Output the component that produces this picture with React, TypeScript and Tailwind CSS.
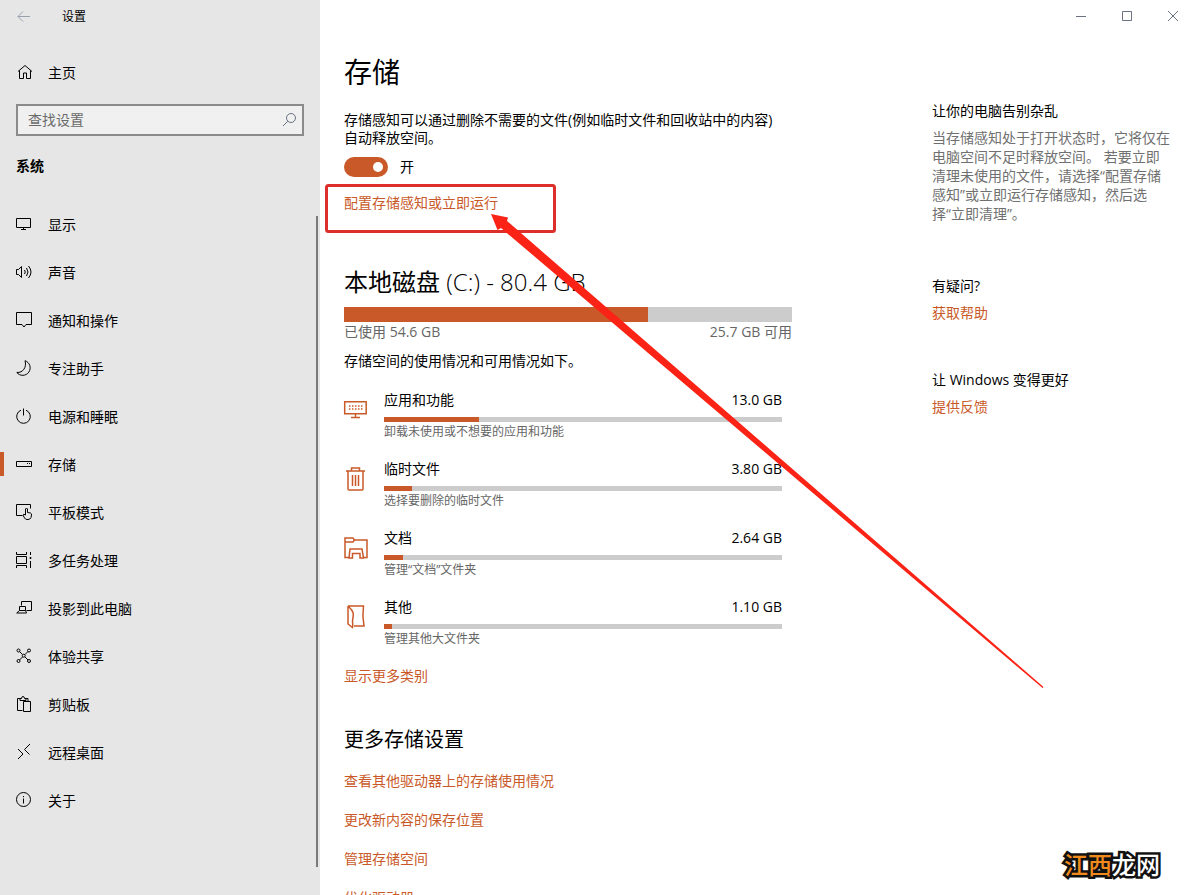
import { useState, type ReactNode } from 'react';

type NavItem = { label: string; icon: ReactNode };

const navItems: NavItem[] = [
  {
    label: '显示',
    icon: <path d="M.5 2.5h14v9H.5zM7.5 11.5v2M5 13.5h5" />,
  },
  {
    label: '声音',
    icon: (
      <path d="M.5 5.5h2l3-3v11l-3-3h-2zM8.5 6q1.500 2 0 4M10.500 4q3 4 0 8M12.500 2q5 6 0 12" />
    ),
  },
  {
    label: '通知和操作',
    icon: <path d="M.5.5h15v12H10l-2 2.500-2-2.500H.5z" />,
  },
  {
    label: '专注助手',
    icon: <path d="M9 .7A7.500 7.500 0 1 1 .8 12.500C7 13 11 7 9 .7z" />,
  },
  {
    label: '电源和睡眠',
    icon: <path d="M5 2.200a6.800 6.800 0 1 0 5 0M7.500.5v7" />,
  },
  {
    label: '存储',
    icon: <path d="M.5 5.500h15v5H.5zM11 7.500h1M13 7.500h1" />,
  },
  {
    label: '平板模式',
    icon: (
      <path d="M6.500 11.500h-6v-11h14v4M9.500 11V5q1-2 2 0v3.500l3 .5q1.200.5 1 2l-.5 2.500q-.8 2-3 2h-1q-1.500 0-2.500-1.500L7 11q.5-1.500 2.500 0" />
    ),
  },
  {
    label: '多任务处理',
    icon: (
      <>
        <path d="M.5 0v2.500h10V0M.5 16v-2.500h10V16M.5 4.500h10v7H.5zM14.500 0v3M14.500 9v7" />
        <path d="M14 5.500h1v1h-1z" fill="currentColor" />
      </>
    ),
  },
  {
    label: '投影到此电脑',
    icon: (
      <path d="M5.500 5.500v-4h10v9h-5M3.500 10.500v-4h6v4M3.500 10.500h6l1 2.500H.7z" />
    ),
  },
  {
    label: '体验共享',
    icon: (
      <>
        <circle cx="2.500" cy="2.500" r="1.500" />
        <circle cx="13" cy="2.500" r="1.500" />
        <circle cx="2.500" cy="13" r="1.500" />
        <circle cx="13" cy="13" r="1.500" />
        <circle cx="7.700" cy="7.700" r="1.500" />
        <path d="M3.500 3.500l3 3M12 3.500l-3 3M3.500 12l3-3M12 12L9 9" />
      </>
    ),
  },
  {
    label: '剪贴板',
    icon: (
      <path d="M6.500 14.500h-5v-12h3M9.500 2.500H12v3M4 4.500v-2h1.500q0-2 1.500-2t1.500 2H10v2zM7.500 5.500h7v10h-7z" />
    ),
  },
  {
    label: '远程桌面',
    icon: <path d="M2 5l5 5-5 5M14 0L8.500 5.500l5 5" />,
  },
  {
    label: '关于',
    icon: (
      <>
        <circle cx="7.500" cy="7.500" r="7" />
        <path d="M7.500 6.500v5M7.500 4v1.200" />
      </>
    ),
  },
];

const usedSpace = 54.6;
const totalSpace = 80.4;

const categories = [
  {
    name: '应用和功能',
    hint: '卸载未使用或不想要的应用和功能',
    size: '13.0 GB',
    value: 13,
    icon: (
      <>
        <path d="M.7 4.700h21.500v12H.7zM11.500 17v3.500M7 20.500h9" />
        <path
          d="M5 9h14M5 12h14"
          strokeDasharray="1.500 1.500"
        />
      </>
    ),
  },
  {
    name: '临时文件',
    hint: '选择要删除的临时文件',
    size: '3.80 GB',
    value: 3.8,
    icon: (
      <path d="M2 5h19M7.500 5V2h8v3M4 5v18q0 1 1 1h13q1 0 1-1V5M8.500 9v11M11.500 9v11M14.500 9v11" />
    ),
  },
  {
    name: '文档',
    hint: '管理“文档”文件夹',
    size: '2.64 GB',
    value: 2.64,
    icon: (
      <path d="M5 22.500H1V3h8l1.500 2H23v17.500h-4M1 7h8l1.500-2M5 23l1-9h12l1.500 9H16v-4.500H8.500V23z" />
    ),
  },
  {
    name: '其他',
    hint: '管理其他大文件夹',
    size: '1.10 GB',
    value: 1.1,
    icon: (
      <path d="M4 2h15.500c-1 7-1 12 .5 20H10M4 2v18l4.500 3.500q.5-2 0-6c0-3 1.500-6 .5-9C8 5.500 6 4 4 2" />
    ),
  },
];

const moreLinks = [
  '查看其他驱动器上的存储使用情况',
  '更改新内容的保存位置',
  '管理存储空间',
  '优化驱动器',
];

const linkClass = 'text-[#c95928] hover:text-gray-500';

function LineIcon({ children }: Readonly<{ children: ReactNode }>) {
  return (
    <svg
      viewBox="0 0 16 16"
      className="size-4 shrink-0 overflow-visible"
      fill="none"
      stroke="currentColor"
      aria-hidden="true"
    >
      {children}
    </svg>
  );
}

function Sidebar() {
  const [active, setActive] = useState('存储');

  return (
    <aside className="flex w-80 shrink-0 flex-col bg-[#e6e6e6]">
      <div className="flex h-8 items-center gap-[30px] pl-4">
        <button type="button" aria-label="返回" className="text-gray-400">
          <LineIcon>
            <path d="M14 8.500H2M7 3.500l-5 5 5 5" />
          </LineIcon>
        </button>
        <span className="pt-0.5 text-xs">设置</span>
      </div>

      <a href="#home" className="mt-4 flex h-12 items-center gap-4 pl-4">
        <LineIcon>
          <path d="M2 7.500l7-6 7 6M3.500 6.500v8h4V9h3v5.500h4v-8" />
        </LineIcon>
        <span className="pt-0.5">主页</span>
      </a>

      <div className="mx-4 mt-2 flex h-8 items-center border-2 border-[#8a8a8a] bg-[#f0f0f0] pr-1 pl-2.5 text-gray-500">
        <input
          type="search"
          aria-label="查找设置"
          placeholder="查找设置"
          className="w-full min-w-0 bg-transparent outline-none placeholder:text-[#6a6a6a]"
        />
        <LineIcon>
          <circle cx="9" cy="6" r="4.500" />
          <path d="M5.800 9.200L1 14" />
        </LineIcon>
      </div>

      <h2 className="mt-5 px-4 leading-5 font-bold">系统</h2>

      <div className="mt-6 flex min-h-0 flex-1">
        <nav className="flex-1">
          {navItems.map((item) => (
            <a
              key={item.label}
              href={`#${item.label}`}
              onClick={() => setActive(item.label)}
              className="flex h-12 items-center hover:bg-black/5"
            >
              <span
                className={
                  item.label === active ? 'h-6 w-1 bg-[#c95928]' : 'h-6 w-1'
                }
              />
              <span className="flex items-center gap-4 pl-3">
                <LineIcon>{item.icon}</LineIcon>
                <span className="pt-0.5">{item.label}</span>
              </span>
            </a>
          ))}
        </nav>
        <div className="mt-4 mr-0.5 mb-7 w-0.5 bg-[#7a7a7a]" />
      </div>
    </aside>
  );
}

function WindowControls() {
  return (
    <div className="flex h-8 shrink-0 justify-end text-gray-500">
      <button
        type="button"
        aria-label="最小化"
        className="flex w-[46px] items-center justify-center"
      >
        <LineIcon>
          <path d="M3 8.500h10" />
        </LineIcon>
      </button>
      <button
        type="button"
        aria-label="最大化"
        className="flex w-[46px] items-center justify-center"
      >
        <LineIcon>
          <path d="M3.500 3.500h9v9h-9z" />
        </LineIcon>
      </button>
      <button
        type="button"
        aria-label="关闭"
        className="flex w-[46px] items-center justify-center"
      >
        <LineIcon>
          <path d="M3 3l10 10M13 3L3 13" />
        </LineIcon>
      </button>
    </div>
  );
}

function CategoryRow({
  category,
}: Readonly<{ category: (typeof categories)[number] }>) {
  return (
    <li className="flex h-[69px] gap-4 pr-2.5">
      <svg
        viewBox="0 0 24 24"
        className="mt-1.5 size-6 shrink-0 overflow-visible"
        fill="none"
        stroke="#c95928"
        strokeWidth="1.5"
        aria-hidden="true"
      >
        {category.icon}
      </svg>
      <div className="flex-1">
        <div className="flex justify-between leading-[18px]">
          <span>{category.name}</span>
          <span>{category.size}</span>
        </div>
        <div className="mt-2 h-[5px] bg-[#cccccc]">
          <div
            className="h-full bg-[#c95928]"
            style={{ width: `${(category.value / usedSpace) * 100}%` }}
          />
        </div>
        <div className="mt-0.5 text-xs leading-4 text-[#666666]">
          {category.hint}
        </div>
      </div>
    </li>
  );
}

function StorageContent() {
  const [enabled, setEnabled] = useState(true);

  return (
    <div className="w-[448px] shrink-0">
      <h1 className="mt-5 text-[28px] leading-10">存储</h1>
      <p className="mt-[19px] pr-3 leading-[18px]">
        存储感知可以通过删除不需要的文件(例如临时文件和回收站中的内容)自动释放空间。
      </p>
      <label className="mt-2.5 flex h-5 items-center gap-3">
        <input
          type="checkbox"
          role="switch"
          checked={enabled}
          onChange={(e) => setEnabled(e.target.checked)}
          className="flex h-5 w-11 appearance-none items-center rounded-full bg-gray-400 px-[5px] before:size-2.5 before:rounded-full before:bg-white checked:justify-end checked:bg-[#c95928]"
        />
        {enabled ? '开' : '关'}
      </label>
      <a href="#configure" className={`mt-4 block leading-5 ${linkClass}`}>
        配置存储感知或立即运行
      </a>

      <h2 className="mt-[53px] text-2xl leading-8">
        本地磁盘 <span className="font-light">(C:) - 80.4 GB</span>
      </h2>
      <div className="mt-[9px] h-[15px] bg-[#cccccc]">
        <div
          className="h-full bg-[#c95928]"
          style={{ width: `${(usedSpace / totalSpace) * 100}%` }}
        />
      </div>
      <div className="flex justify-between leading-5 text-[#666666]">
        <span>已使用 54.6 GB</span>
        <span>25.7 GB 可用</span>
      </div>
      <p className="mt-[9px] leading-5">存储空间的使用情况和可用情况如下。</p>

      <ul className="mt-5">
        {categories.map((c) => (
          <CategoryRow key={c.name} category={c} />
        ))}
      </ul>
      <a href="#categories" className={`block leading-[18px] ${linkClass}`}>
        显示更多类别
      </a>

      <h2 className="mt-[41px] text-xl leading-7">更多存储设置</h2>
      <ul className="mt-[17px]">
        {moreLinks.map((text) => (
          <li key={text} className="h-[39px] leading-5">
            <a href="#more" className={linkClass}>
              {text}
            </a>
          </li>
        ))}
      </ul>
    </div>
  );
}

function HelpColumn() {
  return (
    <aside className="w-60 shrink-0 pt-[69px] leading-5">
      <h3>让你的电脑告别杂乱</h3>
      <p className="mt-[7px] leading-[19px] text-[#707070]">
        当存储感知处于打开状态时，它将仅在电脑空间不足时释放空间。
        若要立即清理未使用的文件，请选择“配置存储感知”或立即运行存储感知，然后选择“立即清理”。
      </p>
      <h3 className="mt-[53px]">有疑问?</h3>
      <a href="#help" className={`mt-[7px] block ${linkClass}`}>
        获取帮助
      </a>
      <h3 className="mt-[47px]">让 Windows 变得更好</h3>
      <a href="#feedback" className={`mt-[7px] block ${linkClass}`}>
        提供反馈
      </a>
    </aside>
  );
}

export default function App() {
  return (
    <div className="relative flex h-screen overflow-hidden bg-white font-['Open_Sans','Noto_Sans_CJK_SC',sans-serif] text-sm text-black">
      <Sidebar />
      <main className="flex min-w-0 flex-1 flex-col">
        <WindowControls />
        <div className="flex min-h-0 flex-1 gap-[140px] pl-6">
          <StorageContent />
          <HelpColumn />
        </div>
      </main>

      {/* callout drawn over the page */}
      <svg
        width="1196"
        height="895"
        className="pointer-events-none absolute top-0 left-0"
        aria-hidden="true"
      >
        <rect
          x="326.500"
          y="185.500"
          width="228"
          height="46"
          rx="2"
          fill="none"
          stroke="#dc2f2b"
          strokeWidth="3"
        />
        <path
          d="M491 214L508 217.500L507 221L1043.500 687L1042.500 688L501 228L497.500 230Z"
          fill="#fb2316"
        />
      </svg>
      <div className="pointer-events-none absolute right-9 bottom-3 text-2xl leading-9 font-medium text-white [-webkit-text-stroke:5px_#111] [paint-order:stroke_fill]">
        <span className="text-[#f08a1c]">江西</span>龙网
      </div>
    </div>
  );
}
